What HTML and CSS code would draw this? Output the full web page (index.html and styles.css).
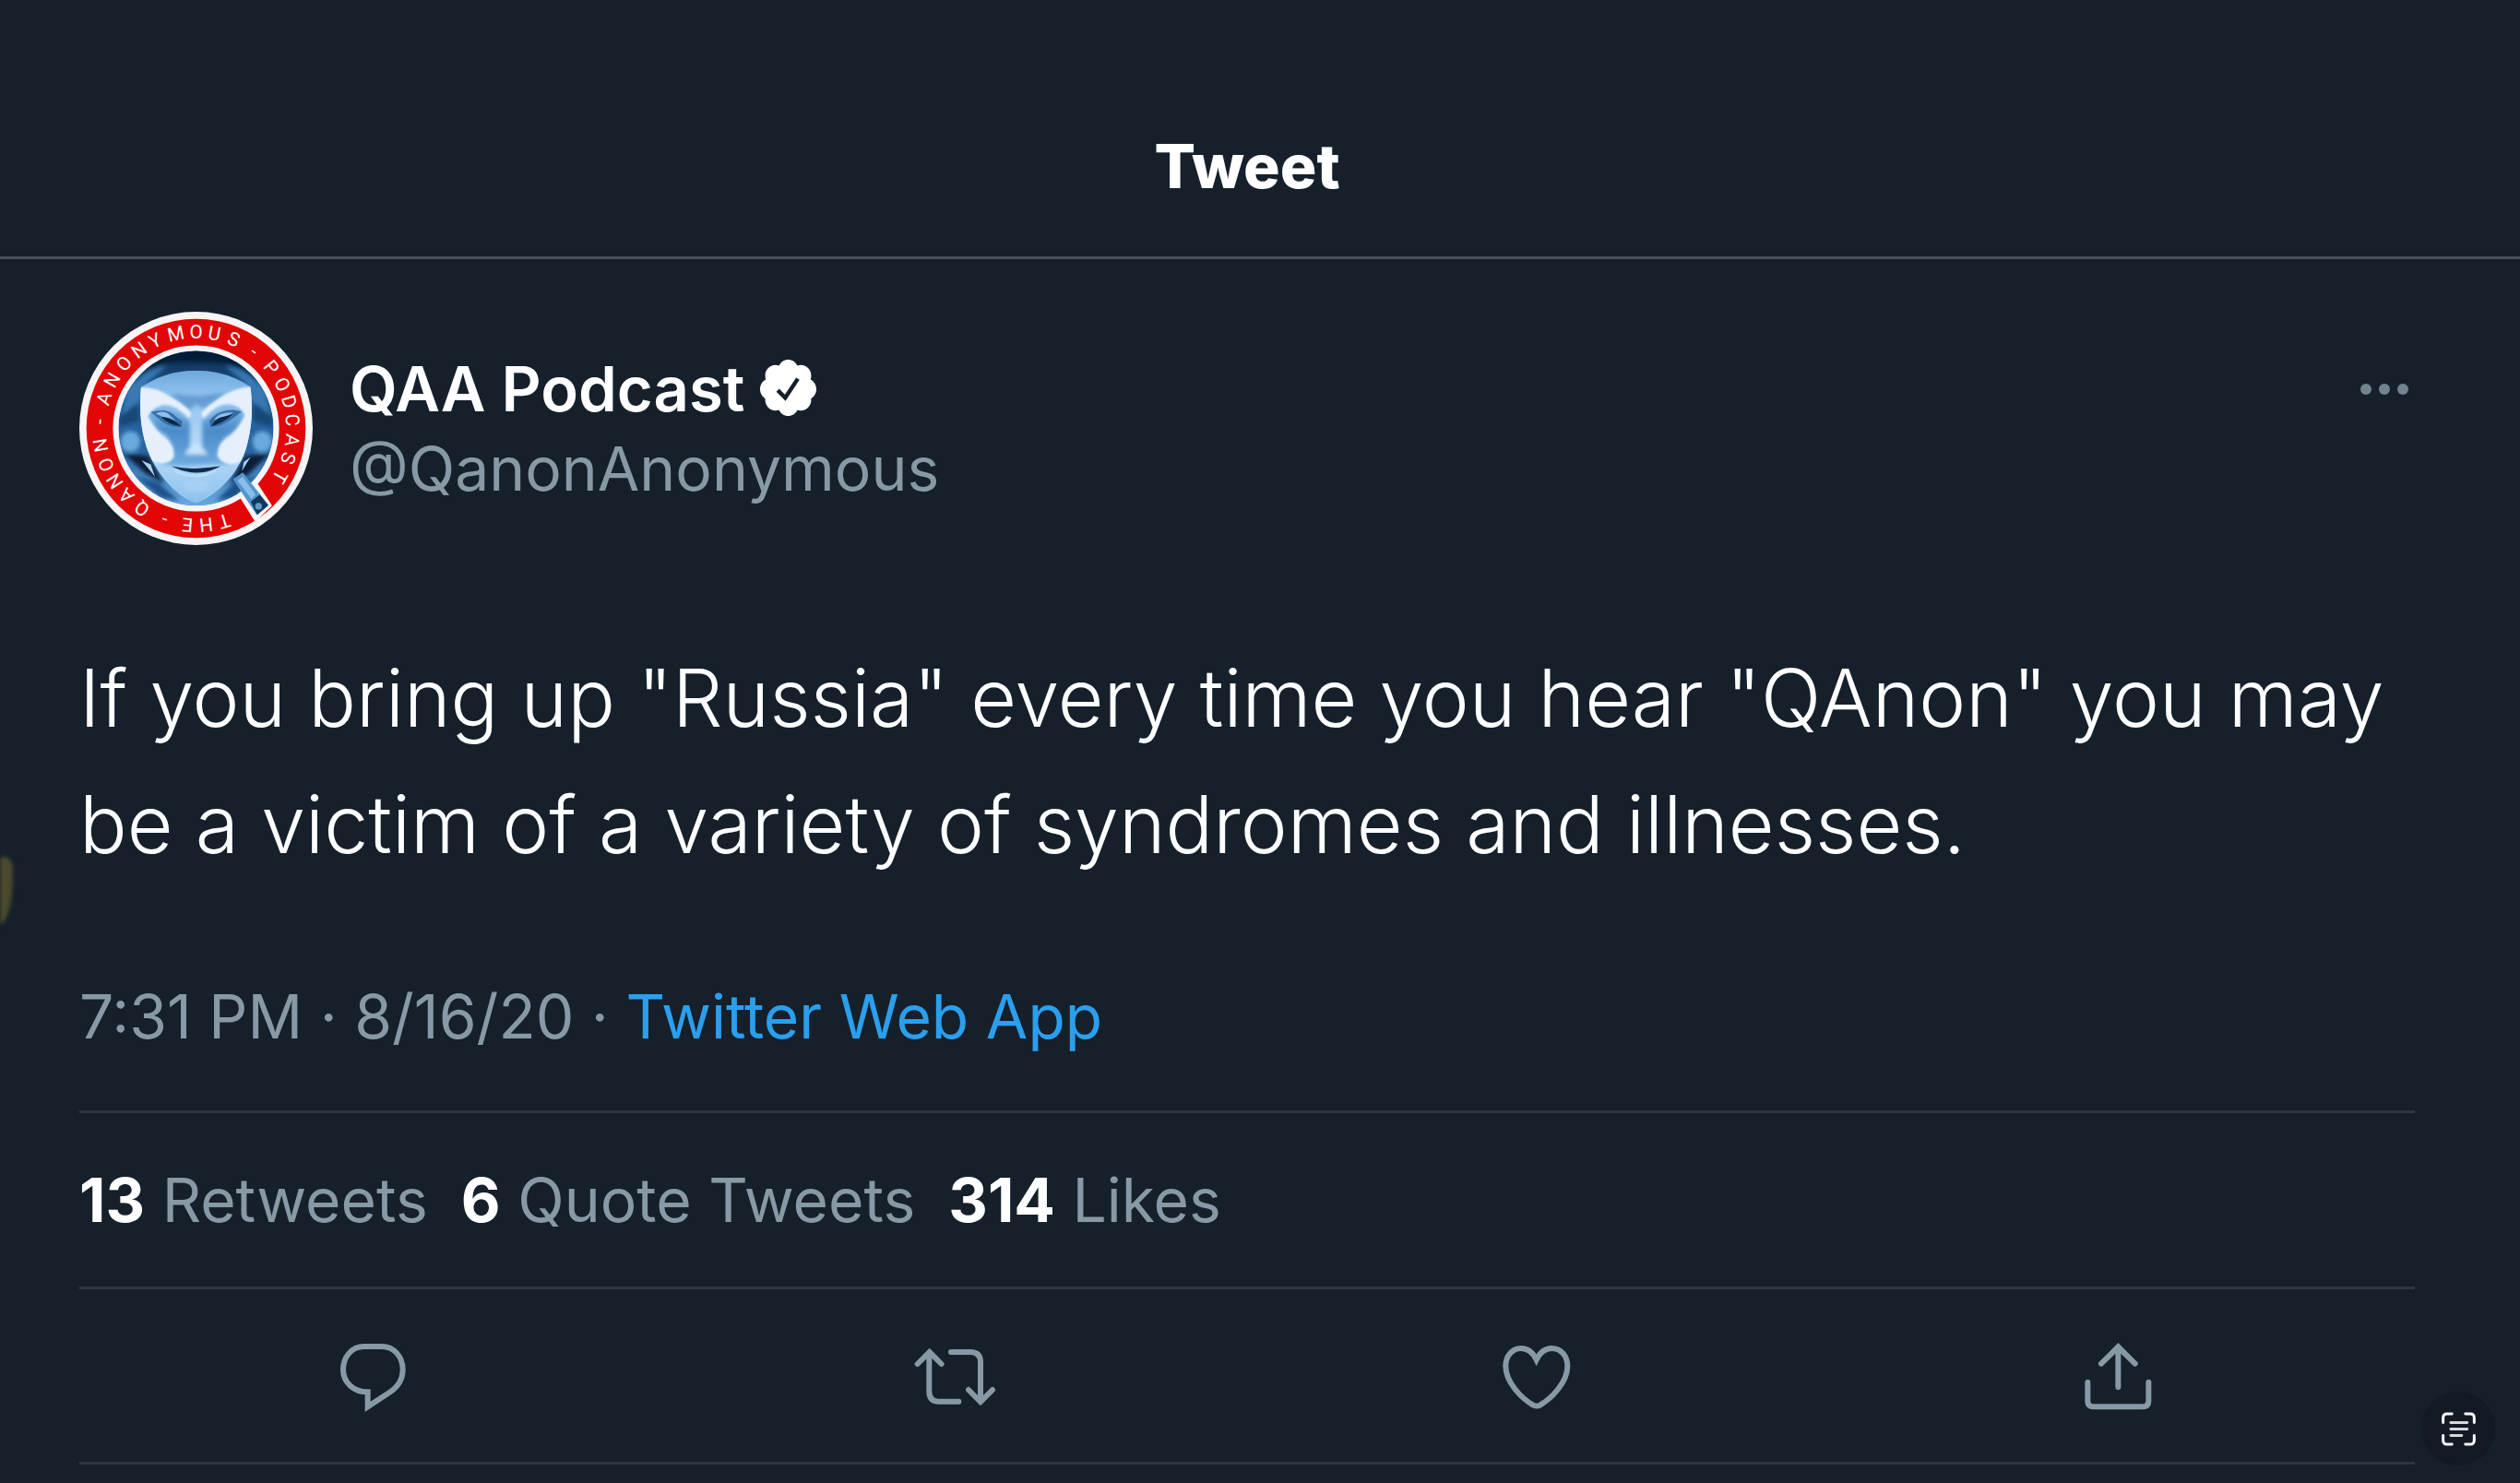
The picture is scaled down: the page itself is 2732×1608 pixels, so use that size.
FILE: index.html
```html
<!DOCTYPE html>
<html lang="en">
<head>
  <meta charset="UTF-8">
  <meta name="viewport" content="width=device-width, initial-scale=1.0">
  <title>Tweet</title>
  <link rel="stylesheet" href="styles.css">
</head>
<body>
  <header class="header">
    <h1>Tweet</h1>
  </header>

  <main class="tweet">
    <div class="author">
      <svg class="avatar" viewBox="46 56 758 758" role="img" aria-label="QAA Podcast">
        <defs>
          <linearGradient id="hood" x1="0" y1="0" x2="0" y2="1">
            <stop offset="0" stop-color="#092442"/>
            <stop offset=".25" stop-color="#225b94"/>
            <stop offset=".65" stop-color="#2866a2"/>
            <stop offset="1" stop-color="#69a9df"/>
          </linearGradient>
          <linearGradient id="mask" x1="0" y1="0" x2="0" y2="1">
            <stop offset="0" stop-color="#69a6dd"/>
            <stop offset=".2" stop-color="#91c3ef"/>
            <stop offset=".6" stop-color="#b9dbf9"/>
            <stop offset="1" stop-color="#8ac0ee"/>
          </linearGradient>
          <linearGradient id="nose" x1="0" y1="0" x2="0" y2="1">
            <stop offset="0" stop-color="#83b7e6"/>
            <stop offset=".4" stop-color="#4a8bc9"/>
            <stop offset="1" stop-color="#6eabe0"/>
          </linearGradient>
          <filter id="soft" x="-20%" y="-20%" width="140%" height="140%">
            <feGaussianBlur stdDeviation="7"/>
          </filter>
          <filter id="edge" x="-20%" y="-20%" width="140%" height="140%">
            <feGaussianBlur stdDeviation="3"/>
          </filter>
          <clipPath id="inner"><circle cx="425" cy="435" r="252"/></clipPath>
          <clipPath id="face"><path d="M246 302Q325 247 425 247T602 300Q614 395 594 475C575 570 505 640 440 672Q425 681 409 672C340 640 278 555 258 475Q238 400 246 302z"/></clipPath>
        </defs>
        <circle cx="425" cy="435" r="379" fill="#f7f5f5"/>
        <circle cx="425" cy="435" r="356" fill="#e20606"/>
        <circle cx="425" cy="435" r="270" fill="#f7f5f8"/>
        <g clip-path="url(#inner)">
          <circle cx="425" cy="435" r="252" fill="url(#hood)"/>
          <g filter="url(#soft)">
            <path d="M220 290C290 205 360 218 425 218s150-8 208 82l-20-85-190-45-150 40z" fill="#061c37"/>
            <path d="M200 310q60-70 130-78l-60 50-35 80-50 40zM650 310q-60-70-130-78l60 50 35 80 50 40z" fill="#3779b4"/>
            <path d="M175 400l60-50 5 60-60 20zM675 400l-60-50-5 60 60 20z" fill="#174777"/>
            <ellipse cx="212" cy="478" rx="32" ry="34" fill="#69a9dc"/>
            <ellipse cx="640" cy="478" rx="32" ry="34" fill="#69a9dc"/>
            <path d="M190 515l80 10 50 90-60-35zM665 515l-80 10-50 90 60-30z" fill="#081e39"/>
            <path d="M230 590l70 20 70 60-60-10zM620 590l-70 20-60 60 60-10z" fill="#1a508a"/>
          </g>
          <path d="M248 538l30 14 14 40zM602 528l-22 16-6 30z" fill="#a5d0ed"/>
        </g>
        <!-- mask -->
        <g clip-path="url(#face)">
          <rect x="236" y="240" width="380" height="445" fill="url(#mask)"/>
          <g filter="url(#soft)">
            <path d="M342 322Q390 370 408 374L425 355L447 370Q480 355 520 318L435 330z" fill="#659cd1"/>
            <path d="M265 385Q330 345 385 395L405 410V500L445 500V410L468 395Q520 345 585 380Q570 430 535 455Q500 470 495 530L540 550Q480 550 425 555T312 550L354 530Q350 460 300 440z" fill="url(#nose)"/>
            <path d="M389 520Q395 505 410 495Q425 475 440 495Q455 505 462 520z" fill="#c9e5fc"/>
            <path d="M375 610Q425 592 480 608L452 640H400z" fill="#a7d0f5"/>
          </g>
          <g filter="url(#edge)" fill="#e6f0fc">
            <path d="M240 302Q300 300 345 335Q390 360 410 386L402 402Q350 345 305 362Q280 372 268 396Q290 440 330 472Q352 490 352 520Q352 545 318 548L270 540L235 400z"/>
            <path d="M612 300Q550 300 505 335Q465 360 442 386L450 402Q500 345 545 358Q575 368 584 392Q565 440 520 472Q496 490 496 520Q500 545 535 552L590 540L620 400z"/>
          </g>
        </g>
        <path d="M278 382Q325 368 350 388Q366 404 380 412L379 430Q330 432 305 404zM469 410Q494 375 545 375L573 380Q540 410 505 425L471 431z" fill="#376fa5"/>
        <path d="M294 386q28-12 46 6l22 22-42-14zM484 408q12-26 62-25l-32 18z" fill="#8fc0ea"/>
        <path d="M312 397q30 3 48 16l16 15q-42-4-64-31zM475 428q8-18 27-28l42-11q-28 27-69 39z" fill="#0c294b"/>
        <path d="M345 558Q388 567 425 565T505 558Q463 580 425 579T345 558z" fill="#112b49"/>
        <path d="M355 572Q425 607 490 572" fill="none" stroke="#c6e2fa" stroke-width="8" opacity=".6"/>
        <!-- tail of the Q -->
        <path d="M625 614L672 686L617 738L565 655z" fill="#f7f5f8"/>
        <path d="M545 600L577 578L660 684L622 716z" fill="#5296cf"/>
        <path d="M560 604L577 592L618 650L605 664z" fill="#8bbde6"/>
        <path d="M603 673L632 650L660 685L624 716z" fill="#12375e"/>
        <circle cx="628" cy="688" r="11" fill="#5e9bc9"/>
        <g class="ring">
          <text x="425" y="142" transform="rotate(-72 425 435)">A</text>
          <text x="425" y="142" transform="rotate(-60 425 435)">N</text>
          <text x="425" y="142" transform="rotate(-48 425 435)">O</text>
          <text x="425" y="142" transform="rotate(-36 425 435)">N</text>
          <text x="425" y="142" transform="rotate(-25 425 435)">Y</text>
          <text x="425" y="142" transform="rotate(-12 425 435)">M</text>
          <text x="425" y="142">O</text>
          <text x="425" y="142" transform="rotate(11 425 435)">U</text>
          <text x="425" y="142" transform="rotate(23 425 435)">S</text>
          <text x="425" y="142" transform="rotate(37 425 435)">-</text>
          <text x="425" y="142" transform="rotate(51 425 435)">P</text>
          <text x="425" y="142" transform="rotate(63 425 435)">O</text>
          <text x="425" y="142" transform="rotate(74 425 435)">D</text>
          <text x="425" y="142" transform="rotate(85 425 435)">C</text>
          <text x="425" y="142" transform="rotate(97 425 435)">A</text>
          <text x="425" y="142" transform="rotate(108 425 435)">S</text>
          <text x="425" y="142" transform="rotate(120 425 435)">T</text>
          <text x="425" y="142" transform="rotate(163 425 435)">T</text>
          <text x="425" y="142" transform="rotate(174 425 435)">H</text>
          <text x="425" y="142" transform="rotate(185 425 435)">E</text>
          <text x="425" y="142" transform="rotate(199 425 435)">-</text>
          <text x="425" y="142" transform="rotate(214 425 435)">Q</text>
          <text x="425" y="142" transform="rotate(226 425 435)">A</text>
          <text x="425" y="142" transform="rotate(237 425 435)">N</text>
          <text x="425" y="142" transform="rotate(248 425 435)">O</text>
          <text x="425" y="142" transform="rotate(260 425 435)">N</text>
          <text x="425" y="142" transform="rotate(274 425 435)">-</text>
        </g>
      </svg>
      <div class="names">
        <div class="name">
          <span>QAA Podcast</span>
          <svg class="verified" viewBox="1.5 1.5 21 22" role="img" aria-label="Verified">
            <path d="M22.5 12.5c0-1.58-.875-2.95-2.148-3.6.154-.435.238-.905.238-1.4 0-2.21-1.71-3.998-3.818-3.998-.47 0-.92.084-1.336.25C14.818 2.415 13.51 1.5 12 1.5s-2.816.917-3.437 2.25c-.415-.165-.866-.25-1.336-.25-2.11 0-3.818 1.79-3.818 4 0 .494.083.964.237 1.4-1.272.65-2.147 2.018-2.147 3.6 0 1.495.782 2.798 1.942 3.486-.02.17-.032.34-.032.514 0 2.21 1.708 4 3.818 4 .47 0 .92-.086 1.335-.25.62 1.334 1.926 2.25 3.437 2.25 1.512 0 2.818-.916 3.437-2.25.415.163.865.248 1.336.248 2.11 0 3.818-1.79 3.818-4 0-.174-.012-.344-.033-.513 1.158-.687 1.943-1.99 1.943-3.484z" fill="#fff"/>
            <path d="M8.1 12.9l2.8 2.8 4.7-7.1" fill="none" stroke="#15202b" stroke-width="1.5"/>
          </svg>
        </div>
        <div class="handle">@QanonAnonymous</div>
      </div>
      <button class="more" aria-label="More">
        <svg viewBox="0 0 54 14"><circle cx="7" cy="7" r="6"/><circle cx="27" cy="7" r="6"/><circle cx="47" cy="7" r="6"/></svg>
      </button>
    </div>

    <p class="body">If you bring up "Russia" every time you hear "QAnon" you may be a victim of a variety of syndromes and illnesses.</p>

    <div class="meta">7:31 PM · 8/16/20 · <a href="#">Twitter Web App</a></div>

    <div class="stats">
      <span><b>13</b> Retweets</span>
      <span><b>6</b> Quote Tweets</span>
      <span><b>314</b> Likes</span>
    </div>

    <div class="actions">
      <button aria-label="Reply">
        <svg viewBox="0 0 390 360"><path d="M164 90H222C262 90 290 124 290 165C290 198 274 222 246 240L176 286V238C130 238 96 207 96 165C96 124 124 90 164 90Z"/></svg>
      </button>
      <button aria-label="Retweet">
        <svg viewBox="0 0 390 360"><path d="M74 147L113 108L152 147M112 110V236Q112 269 145 269H208M183 108H246Q279 108 279 141V270M240 231L279 270L318 231"/></svg>
      </button>
      <button aria-label="Like">
        <svg viewBox="0 0 390 360"><path d="M197 133C185 108 168 96 147 96C120 96 97 119 97 154C97 207 150 260 187 281Q197 286 208 281C245 260 298 207 298 154C298 119 275 96 247 96C226 96 209 108 197 133Z"/></svg>
      </button>
      <button aria-label="Share">
        <svg viewBox="0 0 390 360"><path d="M144 146L199 91L254 146M199 93V222M100 206V266Q100 286 120 286H278Q298 286 298 266V206"/></svg>
      </button>
    </div>
  </main>

  <div class="marker"></div>

  <button class="scan" aria-label="Live Text">
    <svg viewBox="0 0 112 110">
      <path d="M5 34V18Q5 5 18 5H34M78 5H94Q107 5 107 18V34M107 76V92Q107 105 94 105H78M34 105H18Q5 105 5 92V76"/>
      <path d="M30 34H84M30 55H84M30 76H66" stroke="#d5d8dc"/>
    </svg>
  </button>
</body>
</html>
```
FILE: styles.css
```css
* {
  box-sizing: border-box;
}

body {
  margin: 0;
  min-height: 100vh;
  overflow-x: hidden;
  position: relative;
  background: #15202b;
  color: #fff;
  font-family: Inter, "Liberation Sans", sans-serif;
  font-size: 66px;
  line-height: 86px;
}

button {
  padding: 0;
  border: none;
  background: none;
  cursor: pointer;
}

svg {
  display: block;
}

.header {
  padding: 137px 114px 55px 86px;
  border-bottom: 3px solid #46515d;
  text-align: center;
}

h1 {
  margin: 0;
  font-size: 66px;
  font-weight: 800;
  line-height: 86px;
}

.tweet {
  padding: 57px 114px 0 86px;
}

.author {
  display: flex;
  align-items: center;
}

.avatar {
  width: 253px;
  height: 253px;
  margin-right: 40px;
}

.ring {
  fill: #fff;
  font-family: Roboto, "Liberation Sans", sans-serif;
  font-size: 62px;
  text-anchor: middle;
}

.name {
  display: flex;
  align-items: center;
  gap: 17px;
  font-size: 67px;
  font-weight: 600;
}

.verified {
  width: 61px;
  height: 64px;
}

.handle,
.meta,
.stats {
  color: #8899a6;
}

.more {
  align-self: flex-start;
  margin: 77px 6px 0 auto;
}

.more svg {
  width: 54px;
  height: 14px;
  fill: #728390;
}

.body {
  margin: 98px 0 96px;
  font-size: 86px;
  font-weight: 300;
  line-height: 137px;
}

.meta {
  padding-bottom: 59px;
  border-bottom: 3px solid #2c3742;
}

.meta a {
  color: #2b9fed;
  text-decoration: none;
}

.stats {
  display: flex;
  gap: 36px;
  padding: 51px 0;
  border-bottom: 3px solid #2c3742;
}

.stats b {
  color: #fff;
  font-weight: 700;
}

.actions {
  display: grid;
  grid-template-columns: repeat(4, 1fr);
  justify-items: center;
  padding: 32px 8px 35px 4px;
  border-bottom: 3px solid #2c3742;
}

.actions svg {
  width: 130px;
  height: 120px;
  fill: none;
  stroke: #8899a6;
  stroke-width: 18px;
  stroke-linecap: round;
}

.marker {
  position: absolute;
  left: 0;
  top: 929px;
  width: 14px;
  height: 73px;
  background: #4c4a2d;
  border-radius: 0 12px 16px 0 / 0 12px 60px 0;
  filter: blur(2px);
}

.scan {
  position: fixed;
  right: 27px;
  bottom: 19px;
  width: 80px;
  height: 80px;
  border-radius: 50%;
  background: #131925;
}

.scan svg {
  width: 37px;
  height: 37px;
  margin: 0 auto;
  fill: none;
  stroke: #fff;
  stroke-width: 9px;
  stroke-linecap: round;
}
```
